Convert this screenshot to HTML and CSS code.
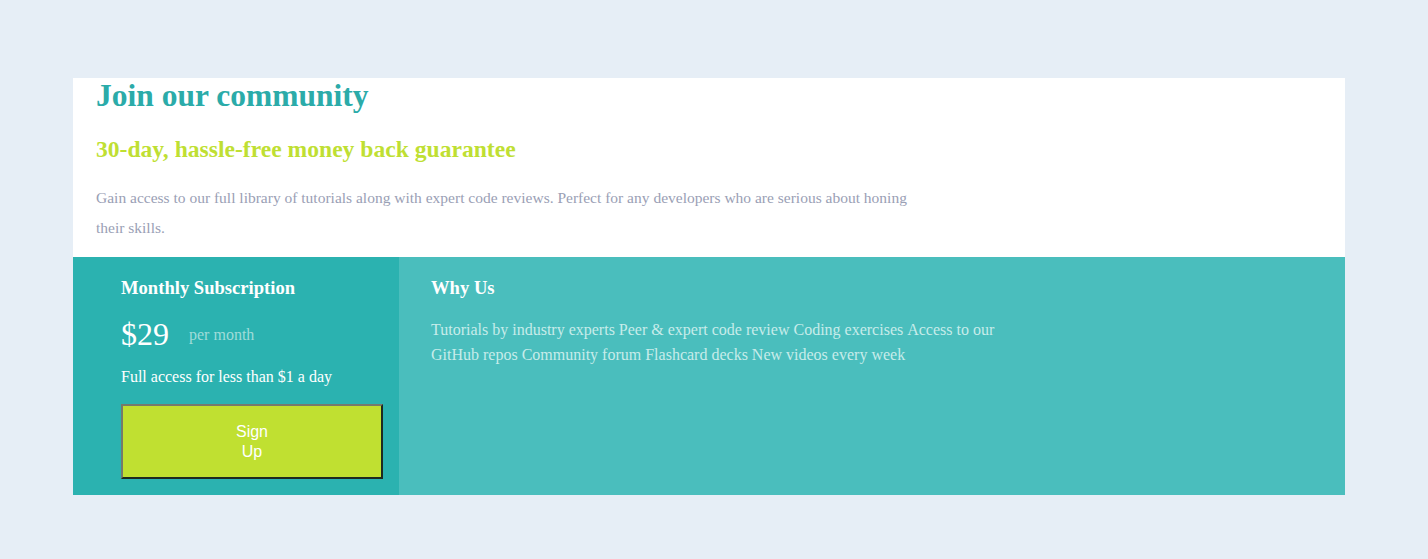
FILE: index.html
```html
<!DOCTYPE html>
<html lang="en">
<head>
<meta charset="utf-8">
<title>Join our community</title>
<link rel="stylesheet" href="styles.css">
</head>
<body>
<main class="card">
  <section class="intro">
    <h1 class="title">Join our community</h1>
    <h2 class="subtitle">30-day, hassle-free money back guarantee</h2>
    <p class="lead">Gain access to our full library of tutorials along with expert code reviews. Perfect for any developers who are serious about honing their skills.</p>
  </section>
  <section class="bottom">
    <div class="subscription">
      <h3 class="col-title">Monthly Subscription</h3>
      <div class="price-row">
        <span class="price">$29</span>
        <span class="per">per month</span>
      </div>
      <p class="access">Full access for less than $1 a day</p>
      <button class="signup" type="button">Sign Up</button>
    </div>
    <div class="why">
      <h3 class="col-title">Why Us</h3>
      <ul class="features">
        <li>Tutorials by industry experts</li>
        <li>Peer &amp; expert code review</li>
        <li>Coding exercises</li>
        <li>Access to our GitHub repos</li>
        <li>Community forum</li>
        <li>Flashcard decks</li>
        <li>New videos every week</li>
      </ul>
    </div>
  </section>
</main>
</body>
</html>
```

FILE: styles.css
```css
html, body {
  margin: 0;
  padding: 0;
}
body {
  background: #e6eef6;
  font-family: "Liberation Serif", "Times New Roman", serif;
  padding-top: 78px;
  height: 559px;
  box-sizing: border-box;
}
.card {
  margin-left: 73px;
  width: 1272px;
  background: #ffffff;
}
.intro {
  padding: 0 23px 14px;
}
.title {
  margin: 0;
  font-size: 31.5px;
  font-weight: bold;
  color: #2baba9;
}
.subtitle {
  margin: 22px 0 0;
  font-size: 23.6px;
  font-weight: bold;
  color: #bfdf33;
}
.lead {
  margin: 20px 0 0;
  max-width: 830px;
  font-size: 15.5px;
  line-height: 30px;
  color: #9aa0b5;
}
.bottom {
  display: grid;
  grid-template-columns: 326px 1fr;
}
.subscription {
  background: #2bb2b0;
  padding: 20px 16px 16px 48px;
  color: #ffffff;
}
.why {
  background: #4abebd;
  padding: 20px 32px 16px 32px;
  color: #ffffff;
}
.col-title {
  margin: 0;
  font-size: 18.6px;
  font-weight: bold;
}
.price-row {
  display: flex;
  align-items: center;
  gap: 20px;
  margin-top: 17px;
}
.price {
  font-size: 32px;
}
.per {
  font-size: 16px;
  color: #9fdcd9;
}
.access {
  margin: 15px 0 0;
  font-size: 16px;
}
.signup {
  display: block;
  margin-top: 18px;
  width: 262px;
  height: 75px;
  padding: 0 106px;
  background: #c0e031;
  border: 2px solid;
  border-color: #767a6c #1e2a20 #1e2a20 #767a6c;
  color: #ffffff;
  font-family: "Liberation Sans", Arial, sans-serif;
  font-size: 16px;
  line-height: 20px;
}
.features {
  list-style: none;
  margin: 18px 0 0;
  padding: 0;
  max-width: 580px;
  font-size: 16px;
  line-height: 25px;
  color: #c7ecea;
}
.features li {
  display: inline;
}
```
